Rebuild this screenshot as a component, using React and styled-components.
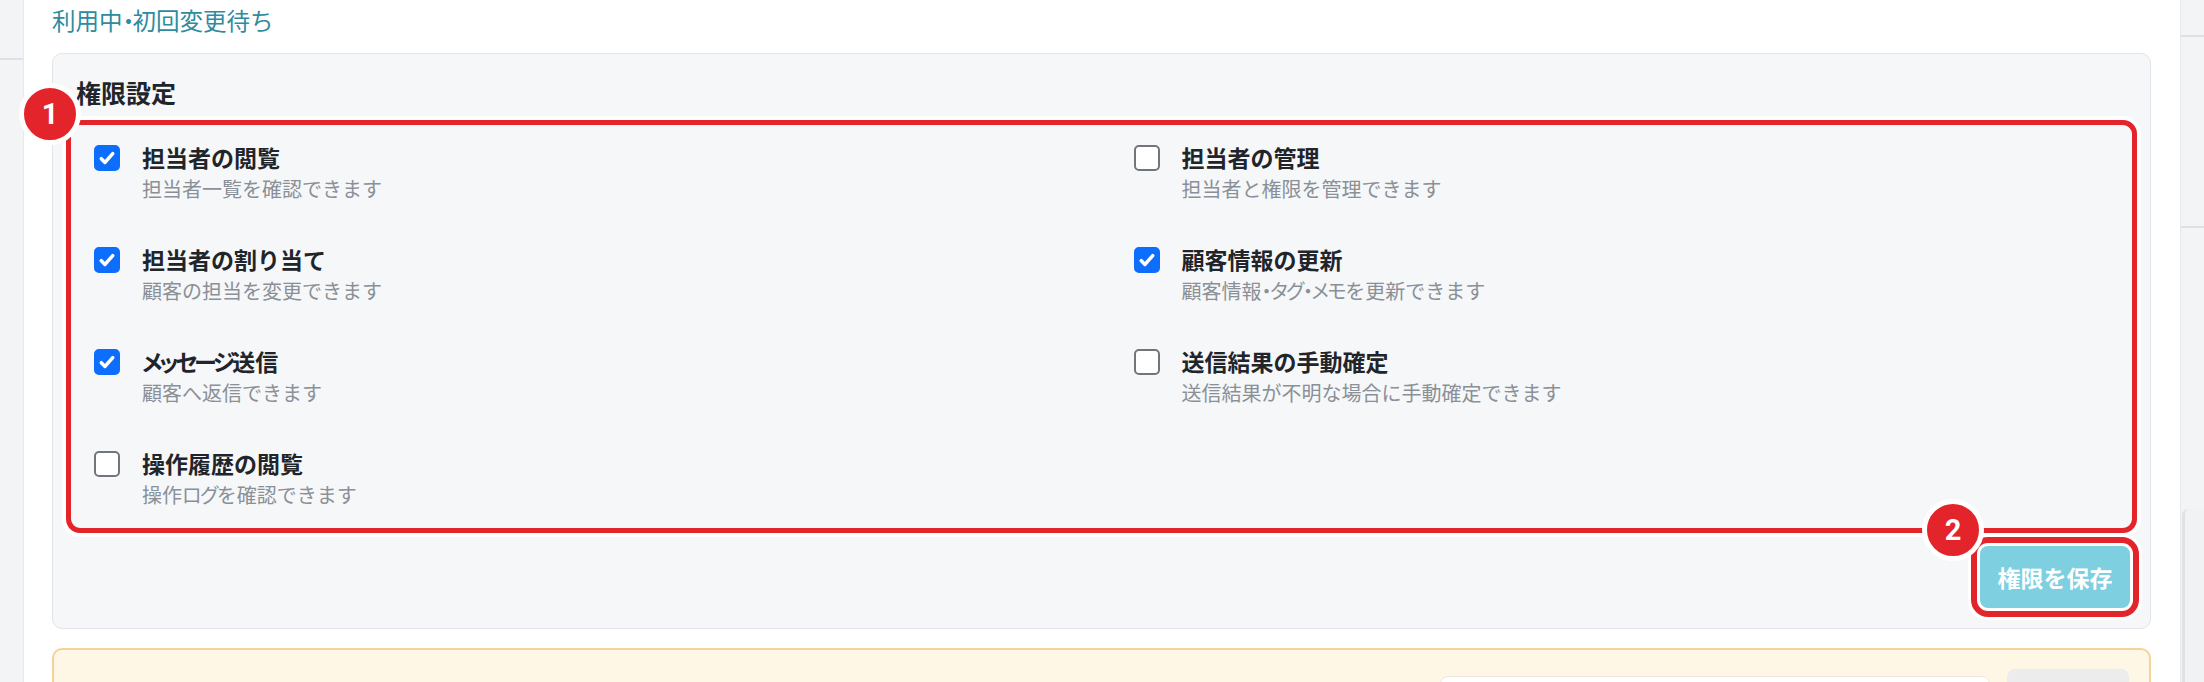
import React from 'react';
import styled, { createGlobalStyle } from 'styled-components';

const GlobalStyle = createGlobalStyle`
  html, body { margin: 0; padding: 0; background: #fff; }
  body {
    width: 2204px;
    height: 682px;
    overflow: hidden;
    font-family: "Noto Sans CJK JP", "Noto Sans", sans-serif;
  }
  * { box-sizing: border-box; }
`;

const Page = styled.div`
  display: flex;
  width: 2204px;
  height: 682px;
  overflow: hidden;
  background: #fff;
`;

const LeftRail = styled.div`
  flex: none;
  width: 24px;
  background: #f3f4f5;
  border-right: 1px solid #e8e9eb;
  display: flex;
  flex-direction: column;
`;

const RightRail = styled.div`
  flex: none;
  width: 24px;
  background: #f3f4f5;
  border-left: 1px solid #e6e7e9;
  display: flex;
  flex-direction: column;
`;

const RailLine = styled.div`
  height: 2px;
  margin-top: ${(p) => p.$top}px;
  background: #dfe0e3;
`;

const RailCard = styled.div`
  flex: 1;
  margin-top: ${(p) => p.$top}px;
  margin-left: 1px;
  border-left: 3px solid #e0e1e4;
  border-top-left-radius: 6px;
  background: #f1f2f3;
`;

const Main = styled.main`
  flex: 1;
  min-width: 0;
  padding: 5px 29px 0 28px;
`;

const Status = styled.div`
  font-size: 23.5px;
  line-height: 30px;
  color: #2f8b9e;
  margin-bottom: 18px;
`;

const Kata = styled.span`
  font-feature-settings: "palt" 1;
  letter-spacing: ${(p) => p.$tight}em;
`;

const Panel = styled.section`
  background: #f6f7f9;
  border: 1px solid #e2e4e7;
  border-radius: 10px;
  padding: 23px 13px 20px 13px;
`;

const PanelTitle = styled.h2`
  margin: 0 0 13px 10px;
  font-size: 25px;
  line-height: 30px;
  font-weight: 700;
  color: #212529;
`;

const Highlight = styled.div`
  position: relative;
  border: 5px solid #e3242b;
  border-radius: 14px;
  box-shadow: 0 0 0 4px #fff;
  padding: 18px 23px 19px 23px;
`;

const Badge = styled.div`
  position: absolute;
  left: ${(p) => p.$left}px;
  top: ${(p) => p.$top}px;
  z-index: 2;
  width: 62px;
  height: 62px;
  border-radius: 50%;
  background: #e3242b;
  border: 5px solid #fff;
  color: #fff;
  font-family: Roboto, "Noto Sans", sans-serif;
  font-weight: 700;
  font-size: 29px;
  display: flex;
  align-items: center;
  justify-content: center;
`;

const Grid = styled.div`
  display: grid;
  grid-template-columns: 1fr 1fr;
  column-gap: 64px;
  row-gap: 42px;
`;

const Item = styled.label`
  display: flex;
  align-items: flex-start;
  gap: 22px;
`;

const Box = styled.span`
  flex: none;
  width: 26px;
  height: 26px;
  margin-top: 2px;
  border-radius: 5px;
  display: flex;
  align-items: center;
  justify-content: center;
  background: ${(p) => (p.$checked ? '#0d6efd' : '#fff')};
  border: 2px solid ${(p) => (p.$checked ? '#0d6efd' : '#727579')};
`;

const ItemText = styled.div`
  display: flex;
  flex-direction: column;
  gap: 4px;
`;

const ItemTitle = styled.div`
  font-size: 23px;
  line-height: 28px;
  font-weight: 700;
  color: #212529;
`;

const ItemDesc = styled.div`
  font-size: 20px;
  line-height: 28px;
  color: #8a9097;
`;

const Footer = styled.div`
  display: flex;
  justify-content: flex-end;
  margin-top: 13px;
  padding-right: 7px;
`;

const SaveWrap = styled.div`
  position: relative;
  display: inline-flex;
`;

const SaveButton = styled.button`
  width: 150px;
  height: 62px;
  border: none;
  border-radius: 8px;
  background: #7ecfe0;
  color: #fff;
  font-family: "Noto Sans CJK JP", "Noto Sans", sans-serif;
  font-size: 23px;
  font-weight: 700;
  box-shadow: 0 0 0 3px #fff, 0 0 0 9px #e3242b, 0 0 0 12px #fff;
  cursor: default;
`;

const Notice = styled.section`
  margin-top: 19px;
  height: 120px;
  background: #fff7e6;
  border: 2px solid #f2d49b;
  border-radius: 10px;
  display: flex;
  justify-content: flex-end;
  align-items: flex-start;
  padding: 19px 20px 0 0;
  gap: 17px;
`;

const NoticeInput = styled.div`
  width: 550px;
  height: 50px;
  margin-top: 7px;
  background: #fff;
  border: 1px solid #ece8df;
  border-radius: 8px;
`;

const NoticeButton = styled.div`
  width: 122px;
  height: 56px;
  background: #ececec;
  border-radius: 8px;
`;

const Check = () => (
  <svg width="22" height="22" viewBox="0 0 20 20" aria-hidden="true">
    <path d="M4.8 10.6l3.4 3.4 7-8" fill="none" stroke="#fff" strokeWidth="3.2" strokeLinecap="round" strokeLinejoin="round" />
  </svg>
);

const KATA_RE = /([\u30A0-\u30FF]+)/;

const JaText = ({ children, tight = -0.07 }) =>
  children.split(KATA_RE).map((part, i) =>
    i % 2 === 1 ? (
      <Kata key={i} $tight={tight}>{part}</Kata>
    ) : (
      <React.Fragment key={i}>{part}</React.Fragment>
    )
  );

const permissions = [
  { title: '担当者の閲覧', desc: '担当者一覧を確認できます', checked: true },
  { title: '担当者の管理', desc: '担当者と権限を管理できます', checked: false },
  { title: '担当者の割り当て', desc: '顧客の担当を変更できます', checked: true },
  { title: '顧客情報の更新', desc: '顧客情報・タグ・メモを更新できます', checked: true },
  { title: 'メッセージ送信', desc: '顧客へ返信できます', checked: true },
  { title: '送信結果の手動確定', desc: '送信結果が不明な場合に手動確定できます', checked: false },
  { title: '操作履歴の閲覧', desc: '操作ログを確認できます', checked: false },
];

export default function App() {
  return (
    <>
      <GlobalStyle />
      <Page>
        <LeftRail>
          <RailLine $top={58} />
        </LeftRail>
        <Main>
          <Status>
            <JaText>利用中・初回変更待ち</JaText>
          </Status>
          <Panel>
            <PanelTitle>権限設定</PanelTitle>
            <Highlight>
              <Badge $left={-52} $top={-42}>1</Badge>
              <Grid>
                {permissions.map((p) => (
                  <Item key={p.title}>
                    <Box $checked={p.checked}>{p.checked && <Check />}</Box>
                    <ItemText>
                      <ItemTitle>
                        <JaText tight={-0.14}>{p.title}</JaText>
                      </ItemTitle>
                      <ItemDesc>
                        <JaText>{p.desc}</JaText>
                      </ItemDesc>
                    </ItemText>
                  </Item>
                ))}
              </Grid>
            </Highlight>
            <Footer>
              <SaveWrap>
                <Badge $left={-58} $top={-47}>2</Badge>
                <SaveButton type="button">権限を保存</SaveButton>
              </SaveWrap>
            </Footer>
          </Panel>
          <Notice>
            <NoticeInput />
            <NoticeButton />
          </Notice>
        </Main>
        <RightRail>
          <RailLine $top={35} />
          <RailLine $top={189} />
          <RailCard $top={281} />
        </RightRail>
      </Page>
    </>
  );
}
